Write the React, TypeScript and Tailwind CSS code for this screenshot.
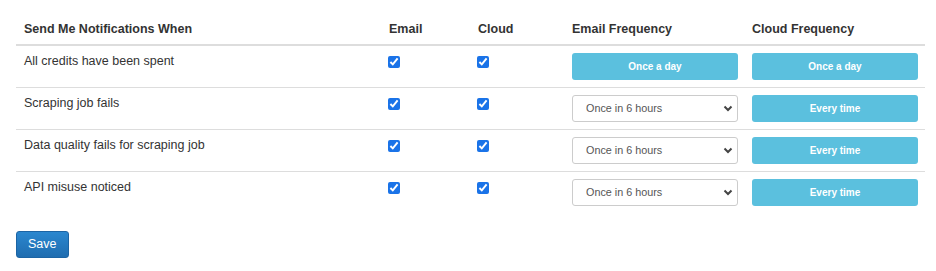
import { useState } from "react"

type Row = {
    label: string
    email: boolean
    cloud: boolean
    emailFreq: string | null
    cloudFreq: string
}

const rows: Row[] = [
    { label: "All credits have been spent", email: true, cloud: true, emailFreq: null, cloudFreq: "Once a day" },
    { label: "Scraping job fails", email: true, cloud: true, emailFreq: "Once in 6 hours", cloudFreq: "Every time" },
    { label: "Data quality fails for scraping job", email: true, cloud: true, emailFreq: "Once in 6 hours", cloudFreq: "Every time" },
    { label: "API misuse noticed", email: true, cloud: true, emailFreq: "Once in 6 hours", cloudFreq: "Every time" },
]

function InfoButton({ children }: { children: string }) {
    return (
        <button className="w-[166px] h-[27px] rounded-[3px] bg-[#5bc0de] text-white text-[10px] font-bold leading-[27px] text-center">
            {children}
        </button>
    )
}

export default function App() {
    const [data, setData] = useState(rows)

    const toggle = (i: number, key: "email" | "cloud") => {
        setData(d => d.map((r, j) => (j === i ? { ...r, [key]: !r[key] } : r)))
    }

    return (
        <div className="bg-white w-[936px] h-[271px] pl-4 text-[#333] text-[12.5px] leading-[15px]" style={{ fontFamily: '"Liberation Sans", Arial, sans-serif' }}>
            <table className="w-[909px] border-collapse table-fixed">
                <colgroup>
                    <col className="w-[365px]" />
                    <col className="w-[89px]" />
                    <col className="w-[94px]" />
                    <col className="w-[180px]" />
                    <col className="w-[181px]" />
                </colgroup>
                <thead>
                    <tr className="h-[45px]">
                        <th className="text-left align-bottom font-bold px-2 pb-[7px] border-b-2 border-[#ddd]">Send Me Notifications When</th>
                        <th className="text-left align-bottom font-bold px-2 pb-[7px] border-b-2 border-[#ddd]">Email</th>
                        <th className="text-left align-bottom font-bold px-2 pb-[7px] border-b-2 border-[#ddd]">Cloud</th>
                        <th className="text-left align-bottom font-bold px-2 pb-[7px] border-b-2 border-[#ddd]">Email Frequency</th>
                        <th className="text-left align-bottom font-bold px-2 pb-[7px] border-b-2 border-[#ddd]">Cloud Frequency</th>
                    </tr>
                </thead>
                <tbody>
                    {data.map((r, i) => (
                        <tr key={r.label} className={i > 0 ? "border-t border-[#ddd]" : ""}>
                            <td className="align-top px-2 pt-[8px] pb-[6px] h-[41px]">{r.label}</td>
                            <td className="align-top px-2 py-[7px]">
                                <input type="checkbox" checked={r.email} onChange={() => toggle(i, "email")} className="w-[12px] h-[12px] mt-[3px] -ml-px block accent-[#1a73e8]" />
                            </td>
                            <td className="align-top px-2 py-[7px]">
                                <input type="checkbox" checked={r.cloud} onChange={() => toggle(i, "cloud")} className="w-[12px] h-[12px] mt-[3px] -ml-px block accent-[#1a73e8]" />
                            </td>
                            <td className="align-top px-2 py-[7px]">
                                {r.emailFreq ? (
                                    <div className="relative w-[166px] h-[27px]">
                                        <select defaultValue={r.emailFreq} className="appearance-none w-full h-full border border-[#ccc] rounded-[3px] bg-white pl-[13px] text-[10.8px] text-[#555]">
                                            <option>Once in 6 hours</option>
                                            <option>Once a day</option>
                                            <option>Every time</option>
                                        </select>
                                        <svg className="absolute right-[5px] top-[10px] pointer-events-none" width="10" height="7" viewBox="0 0 10 7">
                                            <path d="M1.5 1.5 L5 5 L8.5 1.5" fill="none" stroke="#444" strokeWidth="2" />
                                        </svg>
                                    </div>
                                ) : (
                                    <InfoButton>Once a day</InfoButton>
                                )}
                            </td>
                            <td className="align-top px-2 py-[7px]">
                                <InfoButton>{r.cloudFreq}</InfoButton>
                            </td>
                        </tr>
                    ))}
                </tbody>
            </table>
            <button className="mt-[18px] h-[27px] px-[11px] text-[12.5px] leading-[25px] text-white rounded-[3px] border border-[#1c64a4] bg-gradient-to-b from-[#2b87cf] to-[#1f6db0]">
                Save
            </button>
        </div>
    )
}
